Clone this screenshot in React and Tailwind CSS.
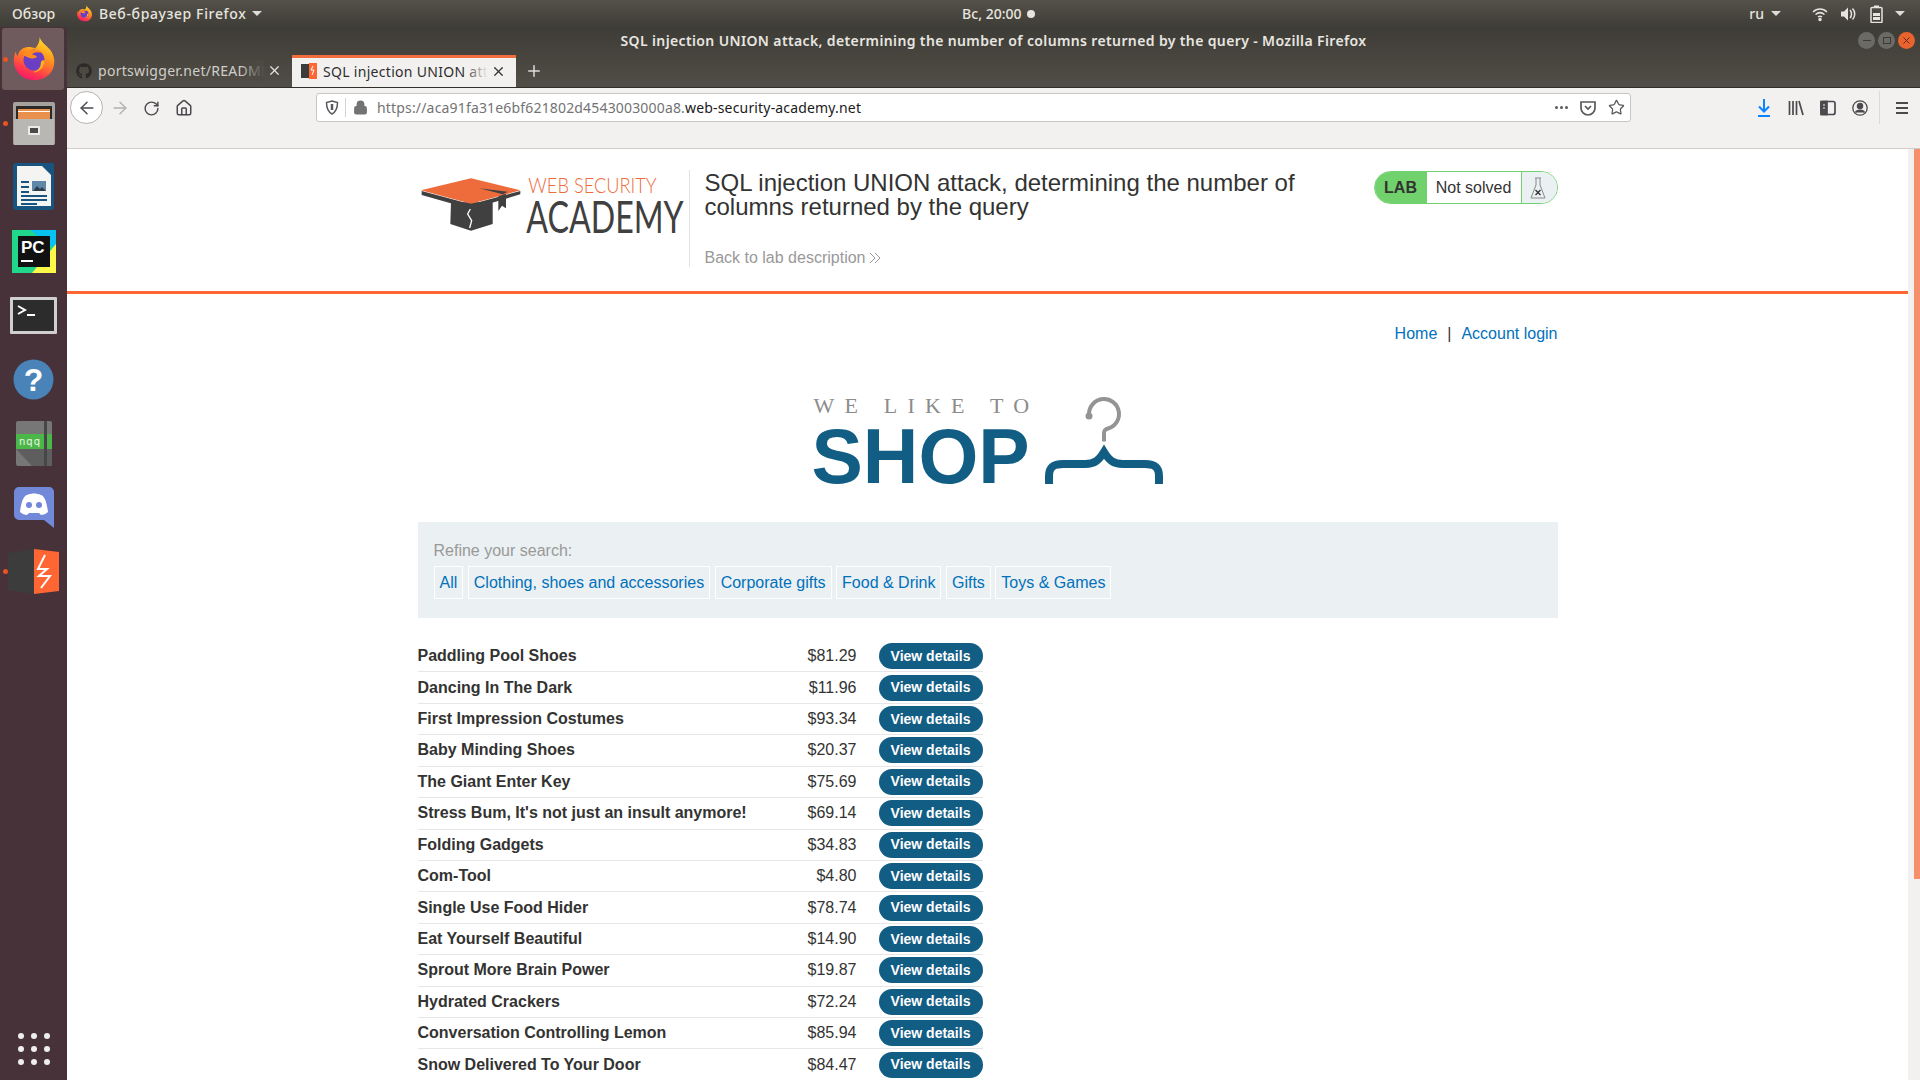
import React from "react";
import { ArrowLeft, ArrowRight, RotateCw, Home, Lock, X, Plus, Star } from "lucide-react";
import { FaGithub } from "react-icons/fa";

const products = [
  ["Paddling Pool Shoes", "$81.29"],
  ["Dancing In The Dark", "$11.96"],
  ["First Impression Costumes", "$93.34"],
  ["Baby Minding Shoes", "$20.37"],
  ["The Giant Enter Key", "$75.69"],
  ["Stress Bum, It's not just an insult anymore!", "$69.14"],
  ["Folding Gadgets", "$34.83"],
  ["Com-Tool", "$4.80"],
  ["Single Use Food Hider", "$78.74"],
  ["Eat Yourself Beautiful", "$14.90"],
  ["Sprout More Brain Power", "$19.87"],
  ["Hydrated Crackers", "$72.24"],
  ["Conversation Controlling Lemon", "$85.94"],
  ["Snow Delivered To Your Door", "$84.47"],
];

const categories = ["All", "Clothing, shoes and accessories", "Corporate gifts", "Food & Drink", "Gifts", "Toys & Games"];

function Caret({ className = "" }) {
  return <span className={`inline-block w-0 h-0 border-x-[5px] border-x-transparent border-t-[5px] border-t-[#dedcd6] ${className}`} />;
}

function FirefoxIcon({ size = 46 }) {
  return (
    <svg width={size} height={size} viewBox="0 0 48 48">
      <defs>
        <linearGradient id="fxa" x1="0.7" y1="0" x2="0.3" y2="1">
          <stop offset="0" stopColor="#ffe226" />
          <stop offset="0.45" stopColor="#ff8a1f" />
          <stop offset="0.8" stopColor="#ff3750" />
          <stop offset="1" stopColor="#f5156c" />
        </linearGradient>
      </defs>
      <path d="M30 1c1 6 8 9 12 15 5 8 4 18-2 24-8 8-22 8-30 1C3 35 1 25 5 16c0 2 1 4 2 5 1-5 4-8 8-9 4-1 8 0 10 1 3-3 5-7 5-12z" fill="url(#fxa)" />
      <circle cx="24" cy="25" r="11" fill="#6a3fc4" />
      <path d="M13 20c4-7 15-8 20-2-5-2-9-1-11 1 1 1 5 1 5 3-4 3-9 1-14-2z" fill="#ff8a1f" />
      <path d="M35 25c0 8-6 13-12 13 5-2 8-5 8-9 0-3 2-4 4-4z" fill="#ffb21e" />
    </svg>
  );
}

function Dock() {
  return (
    <div className="w-[67px] shrink-0 bg-[#473239] flex flex-col items-center relative">
      <DockItem active dot>
        <FirefoxIcon />
      </DockItem>
      <DockItem dot>
        <svg width="44" height="43" viewBox="0 0 44 43">
          <rect x="1" y="0" width="42" height="43" rx="2" fill="#a5a29e" />
          <rect x="4" y="4" width="36" height="13" fill="#2c2a28" />
          <rect x="6" y="7" width="32" height="10" fill="#e9914c" />
          <rect x="6" y="9" width="32" height="1" fill="#fff" />
          <rect x="2" y="17" width="40" height="26" fill="#b9b7b3" />
          <rect x="16" y="24" width="12" height="9" rx="1" fill="#ecebe9" />
          <rect x="18" y="26" width="8" height="5" fill="#4a4a4a" />
        </svg>
      </DockItem>
      <DockItem>
        <svg width="42" height="48" viewBox="0 0 42 48">
          <path d="M2 0h28l11 11v33a3 3 0 0 1-3 3H3a3 3 0 0 1-3-3V3a3 3 0 0 1 2-3z" fill="#18547f" />
          <path d="M4 3h25l9 9v31H4z" fill="#f4f4f2" />
          <path d="M29 0l12 0v11z" fill="#18547f" />
          <rect x="19" y="18" width="14" height="10" fill="#5f88a8" />
          <path d="M20 28l4-5 3 3 2-2 4 4z" fill="#2c3e4c" />
          <rect x="8" y="18" width="8" height="2" fill="#18547f" />
          <rect x="8" y="23" width="8" height="2" fill="#18547f" />
          <rect x="8" y="28" width="8" height="2" fill="#18547f" />
          <rect x="8" y="32" width="26" height="2" fill="#18547f" />
          <rect x="8" y="36" width="26" height="2" fill="#18547f" />
          <rect x="8" y="40" width="16" height="2" fill="#18547f" />
        </svg>
      </DockItem>
      <DockItem>
        <svg width="44" height="43" viewBox="0 0 44 43">
          <rect width="44" height="43" fill="#21d789" />
          <path d="M18 0h26v20z" fill="#07c3f2" />
          <path d="M44 14v29H20z" fill="#fcf84a" />
          <rect x="6" y="6" width="32" height="31" fill="#111" />
          <text x="9" y="23" fontFamily="'Liberation Sans', sans-serif" fontWeight="700" fontSize="17" fill="#fff">PC</text>
          <rect x="9" y="30" width="12" height="2" fill="#fff" />
        </svg>
      </DockItem>
      <DockItem>
        <svg width="47" height="37" viewBox="0 0 47 37">
          <rect width="47" height="37" rx="1" fill="#cfcfcd" />
          <rect x="3" y="3" width="41" height="31" fill="#2c2c2c" />
          <path d="M8 9l7 4-7 4" fill="none" stroke="#fff" strokeWidth="2" />
          <rect x="17" y="17" width="8" height="2" fill="#fff" />
        </svg>
      </DockItem>
      <DockItem>
        <svg width="41" height="41" viewBox="0 0 41 41">
          <circle cx="20.5" cy="20.5" r="20" fill="#4a83b8" />
          <text x="20.5" y="32" textAnchor="middle" fontFamily="'Liberation Sans', sans-serif" fontWeight="700" fontSize="32" fill="#fff">?</text>
        </svg>
      </DockItem>
      <DockItem>
        <svg width="36" height="45" viewBox="0 0 36 45">
          <rect width="36" height="45" rx="2" fill="#777" />
          <path d="M0 28h36v17H16z" fill="#5e5e5e" />
          <rect y="13" width="36" height="15" fill="#4cb749" />
          <rect x="28" width="3" height="45" fill="#474747" />
          <text x="14" y="24" textAnchor="middle" fontFamily="'DejaVu Sans', sans-serif" fontSize="10" letterSpacing="1" fill="#e8f5e8">nqq</text>
        </svg>
      </DockItem>
      <DockItem>
        <svg width="40" height="41" viewBox="0 0 40 41">
          <path d="M5 0h30a5 5 0 0 1 5 5v36l-10-8H5a5 5 0 0 1-5-5V5a5 5 0 0 1 5-5z" fill="#7289da" />
          <path d="M13 8c5-2 9-2 14 0 4 1 6 9 7 17-2 2-5 3-7 3l-2-2h-10l-2 2c-2 0-5-1-7-3 1-8 3-16 7-17z" fill="#fff" />
          <circle cx="15" cy="18" r="3" fill="#7289da" />
          <circle cx="25" cy="18" r="3" fill="#7289da" />
        </svg>
      </DockItem>
      <DockItem dot>
        <svg width="51" height="45" viewBox="0 0 51 45">
          <path d="M0 4l26-4v45L0 41z" fill="#3c3c3c" />
          <path d="M26 0l25 3v39l-25 3z" fill="#ff6633" />
          <path d="M37 6l-7 14h9l-8 7h11l-9 12" fill="none" stroke="#fff" strokeWidth="2" />
        </svg>
      </DockItem>
      <div className="mt-auto mb-[15px] grid grid-cols-3 gap-x-[7px] gap-y-[7px]">
        {Array.from({ length: 9 }).map((_, i) => (
          <span key={i} className="w-[6px] h-[6px] rounded-full bg-[#eeeeee]" />
        ))}
      </div>
    </div>
  );
}

function DockItem({ children, active, dot }) {
  return (
    <div className="relative w-full h-[64px] flex items-center justify-center shrink-0">
      {active && <div className="absolute left-[2px] right-[3px] top-[1px] bottom-[1px] rounded-[3px] bg-[#6f5b5e]" />}
      {dot && <span className="absolute left-[3px] top-1/2 -mt-[2px] w-[5px] h-[5px] rounded-full bg-[#e95420]" />}
      <div className="relative flex">{children}</div>
    </div>
  );
}

function TopBar() {
  return (
    <div className="h-[27px] shrink-0 flex items-center bg-gradient-to-b from-[#54514a] to-[#3f3d37] text-[#e6e4df] text-[14px] font-medium font-['Noto_Sans',sans-serif] relative">
      <span className="ml-[12px] w-[64px]">Обзор</span>
      <span className="mr-[6px] flex">
        <FirefoxIcon size={17} />
      </span>
      <span className="tracking-[0.65px]">Веб-браузер Firefox</span>
      <Caret className="ml-[6px]" />
      <div className="absolute left-[962px] flex items-center gap-[5px]">
        <span>Вс, 20:00</span>
        <span className="w-[8px] h-[8px] rounded-full bg-[#e6e4df]" />
      </div>
      <div className="ml-auto flex items-center mr-[15px]">
        <span className="mr-[7px]">ru</span>
        <Caret className="mr-[31px]" />
        <svg width="16" height="16" viewBox="0 0 16 16" className="mr-[12px]" fill="none" stroke="#e6e4df" strokeWidth="1.5">
          <path d="M1 6c4-4 10-4 14 0M3.5 8.5c3-2.5 6-2.5 9 0M6 11c1.300-1 2.700-1 4 0" />
          <circle cx="8" cy="13.500" r="1" fill="#e6e4df" />
        </svg>
        <svg width="16" height="16" viewBox="0 0 16 16" className="mr-[14px]" fill="#e6e4df">
          <path d="M1 5.500h3l4-4v13l-4-4H1z" />
          <path d="M10 4c2 2 2 6 0 8M12.500 2.500c3 3 3 8 0 11" fill="none" stroke="#e6e4df" strokeWidth="1.500" />
        </svg>
        <svg width="13" height="18" viewBox="0 0 13 18" className="mr-[12px]" fill="none">
          <rect x="4" y="0.500" width="5" height="2" fill="#e6e4df" />
          <rect x="1" y="2.500" width="11" height="15" rx="1" stroke="#e6e4df" strokeWidth="1.500" />
          <rect x="3" y="8" width="7" height="3" fill="#e6e4df" />
          <rect x="3" y="12" width="7" height="3" fill="#e6e4df" />
        </svg>
        <Caret />
      </div>
    </div>
  );
}

function WindowButton({ close, children }) {
  return (
    <span className={`w-[17px] h-[17px] rounded-full flex items-center justify-center ${close ? "bg-[#e9632f]" : "bg-[#6c6a64]"}`}>
      {children}
    </span>
  );
}

function Tabs() {
  return (
    <div className="h-[61px] shrink-0 bg-gradient-to-b from-[#3e3c36] to-[#504e46] flex flex-col font-['Noto_Sans',sans-serif] border-b border-[#2f2e2a]">
      <div className="h-[27px] shrink-0 flex items-center relative">
        <div className="flex-1 text-center text-[14px] font-semibold text-[#e8e6e1] tracking-[0.37px]">
          SQL injection UNION attack, determining the number of columns returned by the query - Mozilla Firefox
        </div>
        <div className="absolute right-[5px] top-[5px] flex gap-[3px]">
          <WindowButton>
            <span className="w-[8px] h-[1px] bg-[#3b3a36]" />
          </WindowButton>
          <WindowButton>
            <span className="w-[8px] h-[7px] border border-[#3b3a36]" />
          </WindowButton>
          <WindowButton close>
            <X size={11} color="#5c2410" strokeWidth={2} />
          </WindowButton>
        </div>
      </div>
      <div className="flex items-end flex-1 pl-[8px] text-[14px] tracking-[0.3px]">
        <div className="w-[217px] h-[32px] flex items-center pl-[1px] pr-[10px] pb-[1px] text-[#d0cec8]">
          <FaGithub size={16} color="#2b2a28" className="shrink-0" />
          <span className="relative ml-[6px] w-[166px] overflow-hidden whitespace-nowrap">
            portswigger.net/README
            <span className="absolute right-0 top-0 bottom-0 w-[24px] bg-gradient-to-r from-transparent to-[#4c4a43]" />
          </span>
          <X size={15} className="ml-auto shrink-0" color="#e4e2dd" />
        </div>
        <div className="w-[224px] h-[32px] flex items-center pl-[9px] pr-[10px] pb-[3px] bg-[#f2f1ef] border-t-[3px] border-[#f26c3d] text-[#2e2e2e]">
          <svg width="16" height="16" viewBox="0 0 16 16" className="shrink-0">
            <rect x="0" y="1" width="8" height="14" fill="#3c3c3c" />
            <rect x="8" y="0" width="8" height="16" fill="#ff6633" />
            <path d="M12 3l-2 4h3l-2 5" fill="none" stroke="#fff" strokeWidth="1" />
          </svg>
          <span className="relative ml-[6px] w-[165px] overflow-hidden whitespace-nowrap">
            SQL injection UNION attack
            <span className="absolute right-0 top-0 bottom-0 w-[24px] bg-gradient-to-r from-transparent to-[#f2f1ef]" />
          </span>
          <X size={15} className="ml-auto shrink-0" color="#333" />
        </div>
        <div className="h-[32px] ml-[9px] flex items-center">
          <Plus size={18} color="#dedcd6" />
        </div>
      </div>
    </div>
  );
}

function Toolbar() {
  return (
    <div className="h-[61px] shrink-0 bg-[#f2f1ef] border-b border-[#cfcdca] flex items-start pt-[3px] font-['Noto_Sans',sans-serif] text-[#4a4a4f]">
      <div className="ml-[3px] w-[33px] h-[33px] rounded-full border border-[#b5b3b0] bg-white flex items-center justify-center">
        <ArrowLeft size={20} strokeWidth={1.7} />
      </div>
      <div className="mt-[7px] ml-[7px] flex items-center gap-[13px]">
        <ArrowRight size={20} strokeWidth={1.7} color="#b2b1af" />
        <RotateCw size={17} strokeWidth={2} />
        <Home size={18} strokeWidth={2} className="ml-[2px]" />
      </div>
      <div className="ml-[123px] mt-[2px] w-[1315px] shrink-0 h-[29px] bg-white border border-[#c8c6c3] rounded-[3px] flex items-center text-[14px]">
        <svg width="14" height="15" viewBox="0 0 14 15" className="ml-[8px]" fill="none" stroke="#5a5a5e" strokeWidth="1.500">
          <path d="M7 1l5.500 1.500c0 5-1 9-5.500 11.500C2.500 11.500 1.500 7.500 1.500 2.500z" />
          <path d="M7 4v6" strokeWidth="2.500" />
        </svg>
        <span className="ml-[6px] w-px h-[19px] bg-[#d4d3d0]" />
        <Lock size={15} strokeWidth={2.500} fill="#737373" color="#737373" className="ml-[7px]" />
        <span className="ml-[9px] whitespace-nowrap text-[#737373] tracking-[0.17px]">
          https://aca91fa31e6bf621802d4543003000a8.<span className="text-[#1a1a1a]">web-security-academy.net</span>
        </span>
        <div className="ml-auto mr-[5px] flex items-center">
          <span className="flex gap-[2px] mr-[12px]">
            <span className="w-[3px] h-[3px] rounded-full bg-[#5a5a5e]" />
            <span className="w-[3px] h-[3px] rounded-full bg-[#5a5a5e]" />
            <span className="w-[3px] h-[3px] rounded-full bg-[#5a5a5e]" />
          </span>
          <svg width="16" height="16" viewBox="0 0 16 16" className="mr-[12px]" fill="none" stroke="#5a5a5e" strokeWidth="1.700">
            <path d="M1 2h14v6a7 7 0 0 1-14 0z" />
            <path d="M5 6l3 3 3-3" />
          </svg>
          <Star size={17} strokeWidth={1.800} color="#5a5a5e" />
        </div>
      </div>
      <div className="ml-[125px] flex items-center">
        <svg width="16" height="18" viewBox="0 0 16 18" fill="none" stroke="#0a84ff" strokeWidth="2">
          <path d="M8 0v12M3 7.500l5 5 5-5M2 17h12" />
        </svg>
        <svg width="16" height="16" viewBox="0 0 16 16" className="ml-[16px]" fill="none" stroke="#4a4a4f" strokeWidth="1.700">
          <path d="M1.500 1v14M5 1v14M8.500 1v14M11 1l4 14" />
        </svg>
        <svg width="16" height="16" viewBox="0 0 16 16" className="ml-[16px]" fill="none" stroke="#4a4a4f" strokeWidth="1.700">
          <rect x="1" y="1.500" width="14" height="13" rx="2" />
          <rect x="1" y="1.500" width="6" height="13" fill="#4a4a4f" />
          <path d="M3 5h2M3 8h2" stroke="#f2f1ef" strokeWidth="1" />
        </svg>
        <svg width="16" height="16" viewBox="0 0 16 16" className="ml-[16px]" fill="none" stroke="#4a4a4f" strokeWidth="1.300">
          <circle cx="8" cy="8" r="7.200" />
          <circle cx="8" cy="6" r="2.600" fill="#4a4a4f" />
          <path d="M3.500 12.500c1-3 8-3 9 0" fill="#4a4a4f" />
        </svg>
        <span className="ml-[11px] w-px h-[33px] bg-[#dcdad7]" />
        <svg width="14" height="14" viewBox="0 0 14 14" className="ml-[15px]" fill="none" stroke="#4a4a4f" strokeWidth="1.800">
          <path d="M1 2h12M1 7h12M1 12h12" />
        </svg>
      </div>
    </div>
  );
}

function AcademyLogo() {
  return (
    <svg width="271" height="97" viewBox="21 33 813 291" className="shrink-0">
      <path d="M120 130h125v65l-65 20-62-20z" fill="#404040" />
      <path d="M178 150l-8 15 12 20-6 22" fill="none" stroke="#fff" strokeWidth="4" />
      <path d="M32 96l148 40 148-40v10l-148 44L32 108z" fill="#404040" />
      <path d="M30 94L180 58l148 36-148 40z" fill="#ee6b3b" />
      <path d="M205 88l85 10-14 8z" fill="#404040" />
      <path d="M262 112l23-8v44l-12-8-11 16z" fill="#404040" />
      <text x="352" y="103" fontFamily="Lato, sans-serif" fontWeight="300" fontSize="66" textLength="385" lengthAdjust="spacingAndGlyphs" fill="#ee6b3b">WEB SECURITY</text>
      <text x="346" y="222" fontFamily="Lato, sans-serif" fontWeight="400" fontSize="132" textLength="472" lengthAdjust="spacingAndGlyphs" fill="#404040">ACADEMY</text>
    </svg>
  );
}

function LabStatus() {
  return (
    <div className="w-[184px] h-[33px] mt-[1px] rounded-full border border-[#70d16d] flex overflow-hidden shrink-0">
      <div className="w-[52px] bg-[#70d16d] flex items-center justify-center font-bold text-[#333332]">LAB</div>
      <div className="flex-1 flex items-center justify-center text-[#333332] border-r border-[#70d16d]">Not solved</div>
      <div className="w-[35px] bg-[#ebf0f2] flex items-center justify-center pr-[3px]">
        <svg width="16" height="22" viewBox="0 0 16 22" fill="none" stroke="#8a8a8a" strokeWidth="1">
          <path d="M5 1h6M6 1v7L1 21h14L10 8V1" />
          <path d="M5.500 13l5 5M10.500 13l-5 5" stroke="#333" strokeWidth="1.400" />
        </svg>
      </div>
    </div>
  );
}

function ShopLogo() {
  return (
    <div className="flex justify-center mt-[50px] pl-[3px]">
      <div className="flex items-start">
        <div className="w-[226px]">
          <div className="font-['Liberation_Serif',serif] text-[22px] leading-[25px] text-[#8c8c8c] tracking-[10.2px] whitespace-nowrap">WE LIKE TO</div>
          <div className="font-bold text-[77px] leading-[66px] mt-[5px] -ml-[2px] text-[#125d84] whitespace-nowrap">SHOP</div>
        </div>
        <svg width="122" height="92" viewBox="0 0 122 92" className="ml-[3px] mt-[2px]" fill="none">
          <path d="M46 19a15 15 0 1 1 19 14.500c-3 1-4 2-4 5v8" stroke="#949494" strokeWidth="4" />
          <circle cx="46" cy="21" r="3.500" fill="#949494" />
          <path d="M6 89v-8c0-10 6-12 14-12h22c10 0 14-4 19-12 5 8 9 12 19 12h22c8 0 14 2 14 12v8" stroke="#125d84" strokeWidth="8" />
        </svg>
      </div>
    </div>
  );
}

export default function App() {
  return (
    <div className="w-[1920px] h-[1080px] overflow-hidden flex flex-col font-['Liberation_Sans',sans-serif] text-[16px] text-[#333332] bg-white">
      <TopBar />
      <div className="flex flex-1 min-h-0">
        <Dock />
        <div className="flex-1 flex flex-col min-w-0">
          <Tabs />
          <Toolbar />
          <div className="flex flex-1 min-h-0">
            <div className="flex-1 min-w-0 overflow-hidden">
              {/* Lab header */}
              <div className="h-[145px] shrink-0 border-b-[3px] border-[#ff6633]">
                <div className="w-[1140px] mx-auto pt-[21px] flex items-start">
                  <AcademyLogo />
                  <div className="h-[97px] w-px bg-[#e1e1e1] shrink-0" />
                  <div className="ml-[15px] mt-[1px] flex-1 min-w-0">
                    <h2 className="text-[24px] leading-[24px] text-[#333332] w-[620px]">
                      SQL injection UNION attack, determining the number of columns returned by the query
                    </h2>
                    <div className="mt-[27px] text-[#999999] flex items-center">
                      Back to lab description
                      <svg width="12" height="12" viewBox="0 0 12 12" className="ml-[4px]" fill="none" stroke="#999999" strokeWidth="1">
                        <path d="M1 1l5 5-5 5M6 1l5 5-5 5" />
                      </svg>
                    </div>
                  </div>
                  <LabStatus />
                </div>
              </div>

              {/* Shop */}
              <div className="w-[1140px] mx-auto">
                <div className="mt-[31px] flex justify-end items-center text-[#0071bc] leading-[18px]">
                  <span>Home</span>
                  <span className="mx-[10px] text-[#333332]">|</span>
                  <span>Account login</span>
                </div>
                <ShopLogo />
                <div className="mt-[33px] h-[96px] bg-[#ebf0f2] pl-[16px] pt-[20px]">
                  <div className="text-[#999999] leading-[18px]">Refine your search:</div>
                  <div className="mt-[6px] flex gap-[4.5px]">
                    {categories.map((c) => (
                      <span key={c} className="h-[33px] px-[5px] border border-white flex items-center text-[#0071bc] whitespace-nowrap">
                        {c}
                      </span>
                    ))}
                  </div>
                </div>
                <div className="mt-[23px] w-[565px]">
                  {products.map(([name, price]) => (
                    <div key={name} className="h-[31.43px] border-b border-[#e6e6e6] flex items-center">
                      <span className="flex-1 font-bold whitespace-nowrap">{name}</span>
                      <span className="text-[#333332]">{price}</span>
                      <span className="ml-[22px] w-[104px] h-[26px] rounded-full bg-[#125d84] text-white text-[14px] font-bold flex items-center justify-center">
                        View details
                      </span>
                    </div>
                  ))}
                </div>
              </div>
            </div>
            {/* scrollbar */}
            <div className="w-[12px] shrink-0 bg-[#f2f1ef] flex justify-end">
              <div className="w-[6px] h-[730px] bg-[#f58f6c]" />
            </div>
          </div>
        </div>
      </div>
    </div>
  );
}
